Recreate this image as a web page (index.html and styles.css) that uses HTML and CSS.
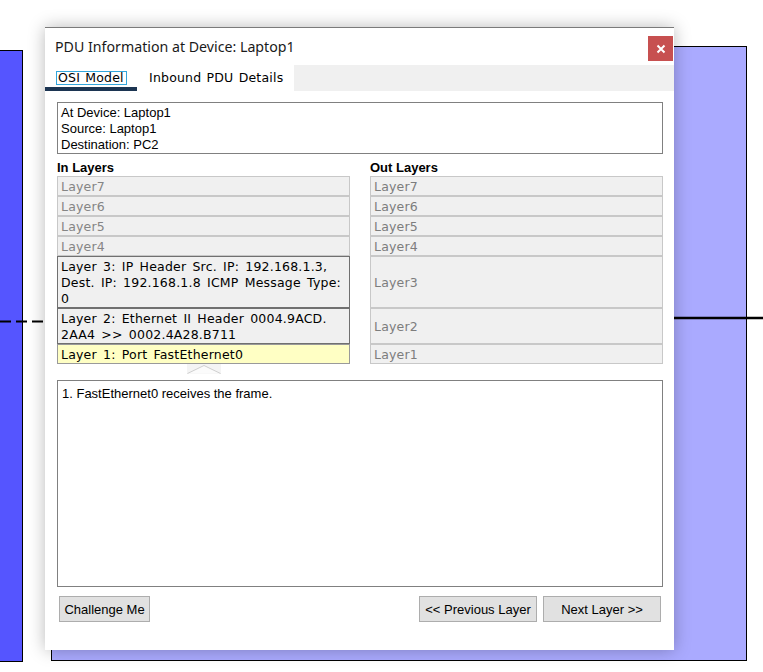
FILE: index.html
```html
<!DOCTYPE html>
<html>
<head>
<meta charset="utf-8">
<title>PDU Information</title>
<link rel="stylesheet" href="styles.css">
</head>
<body>
<div class="canvas">
  <div class="node node-left"></div>
  <div class="node node-right"></div>
  <svg class="links" width="763" height="672" viewBox="0 0 763 672">
    <line x1="0" y1="321.5" x2="46" y2="321.5" stroke="#000" stroke-width="2" stroke-dasharray="11 5"/>
    <line x1="674" y1="318" x2="763" y2="318" stroke="#000" stroke-width="2.5"/>
  </svg>

  <div class="dialog">
    <div class="titlebar">
      <span class="title">PDU Information at Device: Laptop1</span>
      <button class="close" type="button">
        <svg width="10" height="10" viewBox="0 0 10 10"><path d="M1.5 1.5 L8.5 8.5 M8.5 1.5 L1.5 8.5" stroke="#fff" stroke-width="2"/></svg>
      </button>
    </div>
    <div class="tabs">
      <div class="tab tab-active"><span class="focus">OSI Model</span></div>
      <div class="tab">Inbound PDU Details</div>
      <div class="tab-fill"></div>
    </div>
    <div class="content">
      <div class="info">
        <div>At Device: Laptop1</div>
        <div>Source: Laptop1</div>
        <div>Destination: PC2</div>
      </div>
      <div class="layers">
        <div class="col-label">In Layers</div>
        <div class="col-label">Out Layers</div>

        <div class="layer off">Layer7</div>
        <div class="layer off out">Layer7</div>
        <div class="layer off">Layer6</div>
        <div class="layer off out">Layer6</div>
        <div class="layer off">Layer5</div>
        <div class="layer off out">Layer5</div>
        <div class="layer off">Layer4</div>
        <div class="layer off out">Layer4</div>
        <div class="layer on">Layer 3: IP Header Src. IP: 192.168.1.3,<br>Dest. IP: 192.168.1.8 ICMP Message Type:<br>0</div>
        <div class="layer off out">Layer3</div>
        <div class="layer on">Layer 2: Ethernet II Header 0004.9ACD.<br>2AA4 &gt;&gt; 0002.4A28.B711</div>
        <div class="layer off out">Layer2</div>
        <div class="layer on current">Layer 1: Port FastEthernet0</div>
        <div class="layer off out">Layer1</div>

        <div class="pointer">
          <svg width="34" height="10" viewBox="0 0 34 10"><rect x="0" y="0" width="34" height="10" fill="#f4f4f4"/><path d="M0.5 9.5 L17 1.5 L33.5 9.5" fill="#fbfbfb" stroke="#cfcfcf" stroke-width="1"/></svg>
        </div>
      </div>
      <div class="desc">1. FastEthernet0 receives the frame.</div>
      <div class="buttons">
        <button class="btn btn-challenge" type="button">Challenge Me</button>
        <div class="nav">
          <button class="btn btn-nav" type="button">&lt;&lt; Previous Layer</button>
          <button class="btn btn-nav" type="button">Next Layer &gt;&gt;</button>
        </div>
      </div>
    </div>
  </div>
</div>
</body>
</html>
```
FILE: styles.css
```css
html, body {
  margin: 0;
  padding: 0;
  background: #fff;
}
.canvas {
  position: relative;
  width: 763px;
  height: 672px;
  overflow: hidden;
  background: #fff;
}
.node {
  position: absolute;
  box-sizing: border-box;
  border: 1px solid #000;
}
.node-left {
  left: -2px;
  top: 50px;
  width: 25px;
  height: 612px;
  background: #5555ff;
}
.node-right {
  left: 51px;
  top: 46px;
  width: 696px;
  height: 615px;
  background: #aaaaff;
}
.links {
  position: absolute;
  left: 0;
  top: 0;
}
.dialog {
  position: absolute;
  left: 45px;
  top: 27px;
  width: 629px;
  height: 623px;
  box-sizing: border-box;
  background: #fff;
  border-top: 1px solid #7a7a7a;
  box-shadow: 0 0 16px rgba(0, 0, 0, 0.28);
  display: flex;
  flex-direction: column;
}
.titlebar {
  height: 37px;
  display: flex;
  align-items: flex-start;
  justify-content: space-between;
}
.title {
  font-family: "Noto Sans", "Open Sans", sans-serif;
  font-size: 14.2px;
  color: #1a1a1a;
  margin-left: 10px;
  margin-top: 9px;
  line-height: 20px;
}
.close {
  width: 25px;
  height: 25px;
  margin: 8px 1px 0 0;
  padding: 0;
  border: none;
  background: #c75050;
  display: flex;
  align-items: center;
  justify-content: center;
}
.tabs {
  height: 26px;
  display: flex;
  font-family: "DejaVu Sans", Verdana, sans-serif;
  font-size: 12.5px;
  letter-spacing: 0.2px;
  word-spacing: 1px;
  color: #000;
}
.tab {
  box-sizing: border-box;
  height: 26px;
  line-height: 26px;
  padding-left: 12px;
  width: 157px;
  background: #fff;
}
.tab-active {
  width: 92px;
  padding-left: 11px;
  padding-top: 6px;
  line-height: 12px;
  border-bottom: 4px solid #1c3552;
}
.focus {
  display: inline-block;
  border: 1px solid #33a6dc;
  padding: 0 2px 0 1px;
  height: 12px;
  line-height: 12px;
}
.tab-fill {
  flex: 1;
  background: #f0f0f0;
}
.content {
  padding: 11px 11px 0 12px;
  display: flex;
  flex-direction: column;
}
.info {
  box-sizing: border-box;
  height: 52px;
  border: 1px solid #808080;
  padding: 2px 3px 0;
  font-family: "Liberation Sans", Arial, sans-serif;
  font-size: 13px;
  line-height: 16px;
  color: #000;
}
.layers {
  display: grid;
  grid-template-columns: 293px 293px;
  column-gap: 20px;
}
.col-label {
  font-family: "Liberation Sans", Arial, sans-serif;
  font-weight: bold;
  font-size: 13px;
  line-height: 16px;
  padding-top: 6px;
  color: #000;
}
.layer {
  box-sizing: border-box;
  border: 1px solid #c8c8c8;
  background: #f0f0f0;
  padding: 2px 3px 0;
  font-family: "DejaVu Sans", Verdana, sans-serif;
  font-size: 12.5px;
  letter-spacing: 0.2px;
  word-spacing: 2px;
  line-height: 16px;
  white-space: nowrap;
  overflow: hidden;
}
.off {
  color: #858585;
}
.out {
  display: flex;
  align-items: center;
  padding: 2px 3px 0;
  color: #7d7d7d;
}
.on {
  border-color: #707070;
  color: #000;
}
.current {
  background: #ffffc4;
  border-color: #9a9a9a;
}
.pointer {
  grid-column: 1;
  height: 10px;
  display: flex;
  justify-content: center;
}
.pointer svg {
  display: block;
  margin-left: 1px;
}
.desc {
  box-sizing: border-box;
  height: 207px;
  margin-top: 6px;
  border: 1px solid #808080;
  padding: 5px 4px;
  font-family: "Liberation Sans", Arial, sans-serif;
  font-size: 13px;
  line-height: 16px;
  color: #000;
}
.buttons {
  display: flex;
  justify-content: space-between;
  padding: 0 2px;
  margin-top: 9px;
}
.nav {
  display: flex;
  gap: 6px;
}
.btn {
  box-sizing: border-box;
  height: 26px;
  border: 1px solid #adadad;
  background: #e1e1e1;
  font-family: "Liberation Sans", Arial, sans-serif;
  font-size: 13px;
  color: #000;
  padding: 0;
}
.btn-challenge {
  width: 91px;
}
.btn-nav {
  width: 118px;
}
```
